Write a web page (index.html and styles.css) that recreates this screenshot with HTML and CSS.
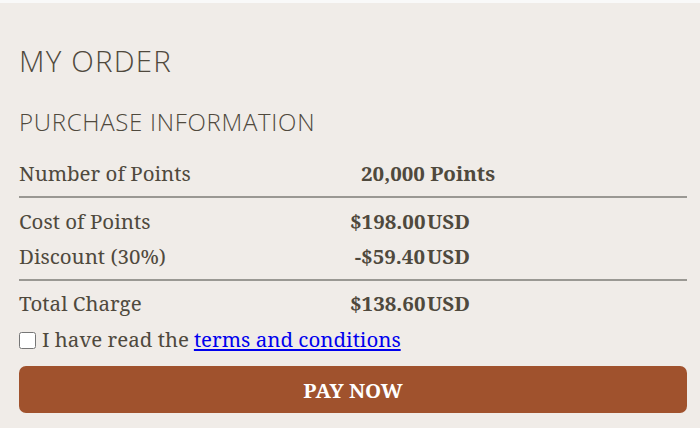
FILE: index.html
```html
<!DOCTYPE html>
<html lang="en">
<head>
  <meta charset="UTF-8">
  <title>My Order</title>
  <link rel="stylesheet" href="styles.css">
</head>
<body>
  <div class="order-panel">
    <h1>MY ORDER</h1>
    <h2>PURCHASE INFORMATION</h2>

    <div class="summary">
      <div class="row">
        <span class="label">Number of Points</span>
        <span class="points">20,000 Points</span>
      </div>
      <hr>
      <div class="row">
        <span class="label">Cost of Points</span>
        <span class="amount">$198.00</span>
        <span class="currency">USD</span>
      </div>
      <div class="row">
        <span class="label">Discount (30%)</span>
        <span class="amount">-$59.40</span>
        <span class="currency">USD</span>
      </div>
      <hr class="total-line">
      <div class="row">
        <span class="label">Total Charge</span>
        <span class="amount">$138.60</span>
        <span class="currency">USD</span>
      </div>
    </div>

    <label class="terms">
      <input type="checkbox">
      I have read the <a href="#">terms and conditions</a>
    </label>

    <button type="button" class="pay-btn">PAY NOW</button>
  </div>
</body>
</html>
```

FILE: styles.css
```css
/* layout general */
body {
  margin: 0;
  background-color: #f9f9f9;
  font-family: "Noto Serif", "DejaVu Serif", serif;
  color: #4f493d;
}
.order-panel {
  box-sizing: border-box;
  margin-top: 3px;
  min-height: calc(100vh - 3px);
  background-color: #f0ece8;
  padding: 37px 13px 14px 19px;
}
.order-panel h1,
.order-panel h2 {
  font-family: "Open Sans", sans-serif;
  font-weight: 300;
  margin: 0;
  color: #4f493d;
}
.order-panel h1 {
  font-size: 29.5px;
  line-height: 42px;
  letter-spacing: 1.2px;
}
.order-panel h2 {
  font-size: 24px;
  line-height: 34px;
  margin-top: 23px;
  letter-spacing: 0.7px;
}
.summary {
  margin-top: 16px;
}
.row {
  display: grid;
  grid-template-columns: 331px 75px auto;
  height: 35px;
  align-items: center;
  font-size: 20.5px;
}
.points {
  grid-column: 2 / 4;
  padding-left: 11px;
  font-weight: bold;
}
.amount {
  text-align: right;
  font-weight: bold;
}
.currency {
  padding-left: 2px;
  font-weight: bold;
}
.summary hr {
  border: none;
  border-top: 2px solid #9a9893;
  margin: 6px 0 5px;
}
.summary .total-line {
  margin: 6px 0 4px;
}
.terms {
  display: flex;
  align-items: center;
  font-size: 20.5px;
  line-height: 28px;
  margin-top: 5px;
}
.terms input {
  width: 17px;
  height: 17px;
  margin: 2px 6px 0 0;
}
.terms a {
  color: #0000ee;
  margin-left: 5px;
}
.pay-btn {
  display: block;
  width: 100%;
  height: 47px;
  margin-top: 13px;
  background-color: #a0522d;
  color: #ffffff;
  border: none;
  border-radius: 7px;
  font-family: "Noto Serif", "DejaVu Serif", serif;
  font-size: 20.5px;
  font-weight: bold;
  cursor: pointer;
}
```
